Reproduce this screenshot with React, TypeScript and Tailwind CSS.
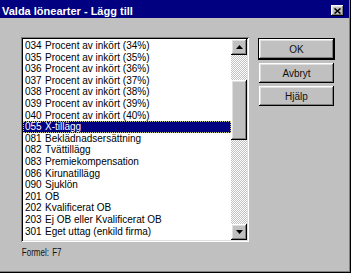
import React from "react";

const rows: [string, string][] = [
  ["034", "Procent av inkört (34%)"],
  ["035", "Procent av inkört (35%)"],
  ["036", "Procent av inkört (36%)"],
  ["037", "Procent av inkört (37%)"],
  ["038", "Procent av inkört (38%)"],
  ["039", "Procent av inkört (39%)"],
  ["040", "Procent av inkört (40%)"],
  ["055", "X-tillägg"],
  ["081", "Beklädnadsersättning"],
  ["082", "Tvättillägg"],
  ["083", "Premiekompensation"],
  ["086", "Kirunatillägg"],
  ["090", "Sjuklön"],
  ["201", "OB"],
  ["202", "Kvalificerat OB"],
  ["203", "Ej OB eller Kvalificerat OB"],
  ["301", "Eget uttag (enkild firma)"],
];

const SELECTED = "055";

const raised =
  "shadow-[inset_-1px_-1px_#000,inset_1px_1px_#fff,inset_-2px_-2px_#808080,inset_2px_2px_#dfdfdf]";

const checker =
  "bg-[repeating-conic-gradient(#c0c0c0_0_25%,#ffffff_0_50%)] bg-[length:2px_2px]";

const Arrow: React.FC<{ down?: boolean }> = ({ down }) => (
  <svg width="7" height="4" viewBox="0 0 7 4">
    {down ? <polygon points="0,0 7,0 3.5,4" fill="#000" /> : <polygon points="0,4 7,4 3.5,0" fill="#000" />}
  </svg>
);

const DlgButton: React.FC<{ label: string; isDefault?: boolean }> = ({ label, isDefault }) => (
  <div className={isDefault ? "border border-black" : "mx-[1px]"}>
    <div className={`${raised} bg-[#c0c0c0] w-[75px] h-[20px] flex items-center justify-center text-[10px] text-[#111]`}>
      {label}
    </div>
  </div>
);

export default function App() {
  return (
    <div
      className="w-[351px] h-[273px] bg-[#c0c0c0] overflow-hidden shadow-[inset_-1px_-1px_#000,inset_-2px_-2px_#808080] pr-[2px] pb-[2px]"
      style={{ fontFamily: '"Liberation Sans", Arial, sans-serif' }}
    >
      {/* title bar */}
      <div className="h-[18px] bg-[#000080] flex justify-between pl-[2px] pr-[5px]">
        <div className="pt-[5px] leading-[13px] text-[11px] font-bold text-white whitespace-nowrap">
          Valda lönearter - Lägg till
        </div>
        <div className={`${raised} bg-[#c0c0c0] mt-[5px] w-[13px] h-[11px] flex items-center justify-center`}>
          <svg width="7" height="6" viewBox="0 0 7 6">
            <path d="M0.5 0.5 L6.5 5.5 M6.5 0.5 L0.5 5.5" stroke="#000" strokeWidth="1.6" />
          </svg>
        </div>
      </div>

      {/* body */}
      <div className="flex pl-[21px] pt-[19px]">
        <div className="flex flex-col">
          <div className="w-[228px] h-[205px] bg-white p-[2px] shadow-[inset_1px_1px_#808080,inset_-1px_-1px_#fff,inset_2px_2px_#000,inset_-2px_-2px_#dfdfdf] flex">
            <div className="flex-1 pt-[1px] overflow-hidden">
              {rows.map(([code, name]) => {
                const sel = code === SELECTED;
                return (
                  <div
                    key={code}
                    className={`h-[11.6px] leading-[11.6px] text-[10px] pl-[2px] flex whitespace-nowrap ${
                      sel ? "bg-[#000080] text-white outline-1 outline-dotted outline-[#c8c880] -outline-offset-1" : "text-black"
                    }`}
                  >
                    <span className="w-[20px] shrink-0">{code}</span>
                    <span>{name}</span>
                  </div>
                );
              })}
            </div>
            {/* scrollbar */}
            <div className="w-[16px] flex flex-col">
              <div className={`${raised} bg-[#c0c0c0] h-[16px] flex items-center justify-center`}>
                <Arrow />
              </div>
              <div className={`${checker} flex-1 flex flex-col`}>
                <div className="h-[25px]" />
                <div className={`${raised} bg-[#c0c0c0] h-[60px]`} />
              </div>
              <div className={`${raised} bg-[#c0c0c0] h-[16px] flex items-center justify-center`}>
                <Arrow down />
              </div>
            </div>
          </div>
          <div className="mt-[5px] pl-[1px] text-[10px] leading-[11.6px] text-[#111] flex gap-[4px] origin-left scale-x-[0.8]">
            <span>Formel:</span>
            <span>F7</span>
          </div>
        </div>

        <div className="ml-[9px] pt-[1px] flex flex-col gap-[3px]">
          <DlgButton label="OK" isDefault />
          <DlgButton label="Avbryt" />
          <DlgButton label="Hjälp" />
        </div>
      </div>
    </div>
  );
}
